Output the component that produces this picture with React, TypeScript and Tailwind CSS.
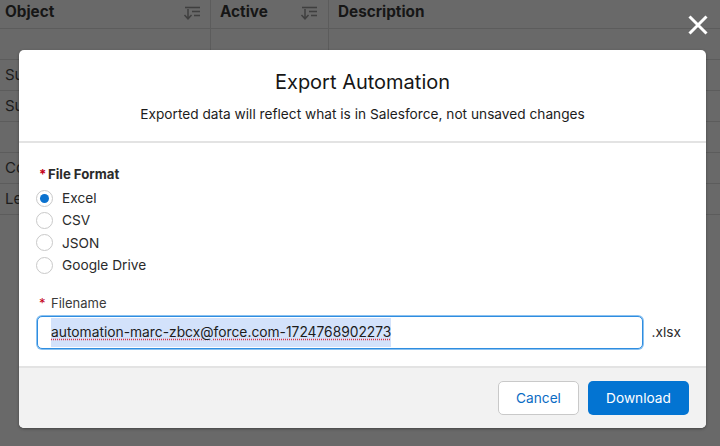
const font = { fontFamily: 'Inter, "Liberation Sans", sans-serif' };

function SortIcon() {
  return (
    <svg width="18" height="14" viewBox="0 0 18 14" fill="none" stroke="#3f3f3f" strokeWidth="1.5">
      <path d="M5 3V12.5M1.5 9L5 12.8L8.5 9" />
      <path d="M2 1.5H17M9 5.5H17M11 9.5H17" />
    </svg>
  );
}

function Row({ label }: { label: string }) {
  return (
    <div className="h-[31px] border-b border-[#5c5c5c] pl-[5px] flex items-center text-[15px] text-[#1c1c1c]">
      {label}
    </div>
  );
}

function Radio({ label, checked }: { label: string; checked?: boolean }) {
  return (
    <div className="flex items-center h-[22.4px]">
      <span className="w-[17px] h-[17px] rounded-full border border-[#c9c9c9] bg-white flex items-center justify-center">
        {checked && <span className="w-[9px] h-[9px] rounded-full bg-[#0b72cf]" />}
      </span>
      <span className="ml-[9px] text-[13.7px] text-[#2b2b2b]">{label}</span>
    </div>
  );
}

export default function App() {
  return (
    <div className="relative w-[720px] h-[446px] overflow-hidden bg-[#696969]" style={font}>
      <div className="flex h-[29px] border-b border-[#5c5c5c] text-[15.3px] font-bold text-[#161616]">
        <div className="w-[211px] border-r border-[#5c5c5c] pl-[5px] pr-[9px] flex justify-between pt-[1px]">
          <span>Object</span>
          <span className="pt-[5px]"><SortIcon /></span>
        </div>
        <div className="w-[118px] border-r border-[#5c5c5c] pl-[9px] pr-[10px] flex justify-between pt-[1px]">
          <span>Active</span>
          <span className="pt-[5px]"><SortIcon /></span>
        </div>
        <div className="flex-1 pl-[9px] pt-[1px]">Description</div>
      </div>
      <div className="flex h-[31px] border-b border-[#5c5c5c]">
        <div className="w-[211px] border-r border-[#5c5c5c]" />
        <div className="w-[118px] border-r border-[#5c5c5c]" />
      </div>
      <Row label="Su" />
      <Row label="Su" />
      <Row label="" />
      <Row label="Co" />
      <Row label="Le" />

      <button className="absolute left-[688px] top-[15px] w-[20px] h-[20px]" aria-label="Close">
        <svg width="20" height="20" viewBox="0 0 20 20" fill="none" stroke="#fff" strokeWidth="3">
          <path d="M1.5 1.5L18.5 18.5M18.5 1.5L1.5 18.5" />
        </svg>
      </button>

      <div className="absolute left-[19px] top-[50px] w-[687px] h-[378px] bg-white rounded-[5px] overflow-hidden flex flex-col shadow-[0_1px_3px_rgba(0,0,0,0.35)]">
        <div className="h-[93px] border-b-2 border-[#e3e3e3] flex flex-col items-center shrink-0">
          <h2 className="mt-[19px] text-[20px] leading-[26px] text-[#161616]">Export Automation</h2>
          <p className="mt-[9px] text-[13.7px] leading-[20px] text-[#1c1c1c]">
            Exported data will reflect what is in Salesforce, not unsaved changes
          </p>
        </div>
        <div className="flex-1 pl-[17px] pr-[25px] pt-[23px]">
          <div className="flex text-[13.2px] leading-[16px] font-bold text-[#2b2b2b] pl-[3px] gap-[3px]">
            <span className="text-[#c4001a] w-[6px]">*</span>
            <span>File Format</span>
          </div>
          <div className="mt-[5px]">
            <Radio label="Excel" checked />
            <Radio label="CSV" />
            <Radio label="JSON" />
            <Radio label="Google Drive" />
          </div>
          <div className="flex mt-[18px] text-[13px] leading-[16px] text-[#3a3a3a] pl-[3px] gap-[6px]">
            <span className="text-[#c4001a] w-[6px]">*</span>
            <span>Filename</span>
          </div>
          <div className="mt-[4px] flex items-center">
            <div className="w-[606px] ml-[1px] h-[33px] my-[1px] rounded-[5px] border border-[#2f8de0] shadow-[0_0_0_1px_#8cc2f0] bg-white pl-[13px] flex items-center">
              <span className="h-[29px] leading-[29px] bg-[#d3e2fb] text-[13.8px] text-[#1c1c1c] whitespace-nowrap underline decoration-dotted decoration-[#e0303f] underline-offset-[2px]">
                automation-marc-zbcx@force.com-1724768902273
              </span>
            </div>
            <span className="ml-[9px] text-[13.7px] text-[#2b2b2b]">.xlsx</span>
          </div>
        </div>
        <div className="h-[62px] shrink-0 bg-[#f2f2f2] border-t-2 border-[#e3e3e3] flex items-center justify-end gap-[9px] pr-[17px]">
          <button className="w-[81px] h-[34px] rounded-[5px] border border-[#c9c9c9] bg-white text-[13.7px] text-[#0b6cc4]">Cancel</button>
          <button className="w-[101px] h-[34px] rounded-[5px] bg-[#0374d2] text-[13.7px] text-white">Download</button>
        </div>
      </div>
    </div>
  );
}
